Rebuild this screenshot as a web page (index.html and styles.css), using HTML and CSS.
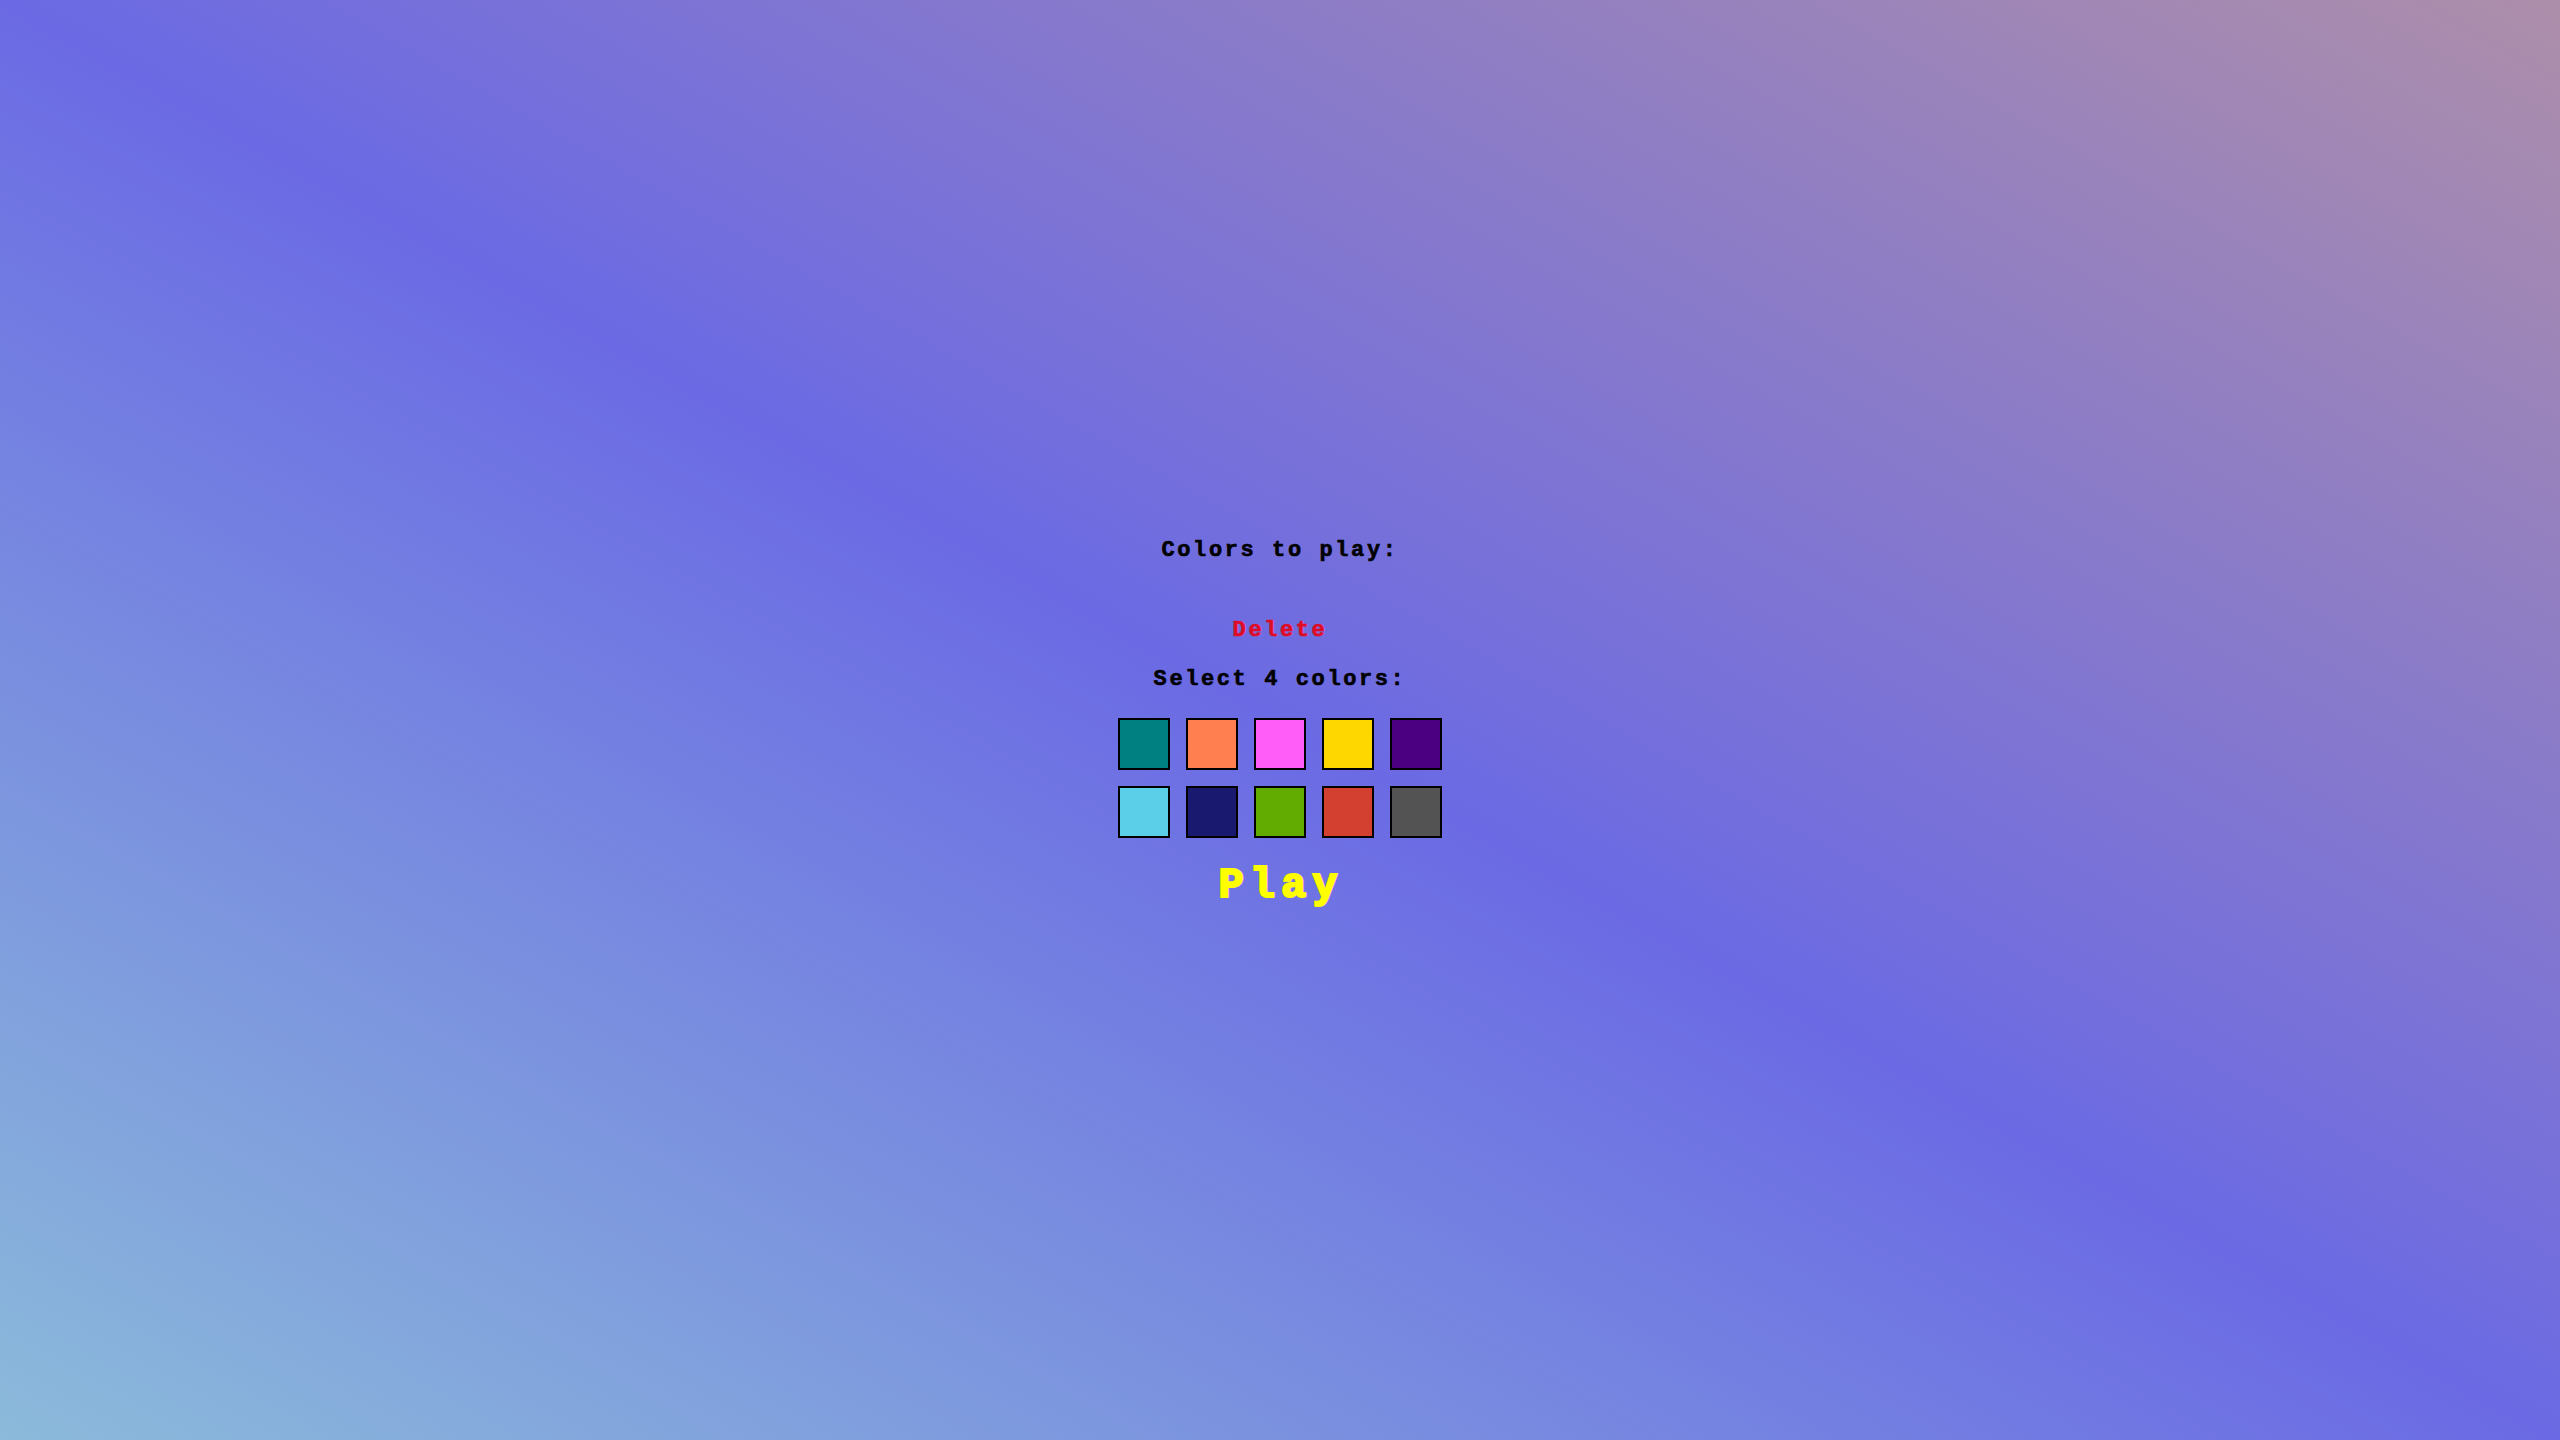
FILE: index.html
```html
<!DOCTYPE html>
<html lang="en">
<head>
<meta charset="utf-8">
<title>Colors</title>
<link rel="stylesheet" href="styles.css">
</head>
<body>
<main class="screen">
  <div class="panel">
    <div class="label">Colors to play:</div>
    <div class="chosen"></div>
    <button class="delete">Delete</button>
    <div class="label select">Select 4 colors:</div>
    <div class="palette">
      <div class="swatch teal"></div>
      <div class="swatch coral"></div>
      <div class="swatch pink"></div>
      <div class="swatch gold"></div>
      <div class="swatch indigo"></div>
      <div class="swatch sky"></div>
      <div class="swatch navy"></div>
      <div class="swatch green"></div>
      <div class="swatch red"></div>
      <div class="swatch grey"></div>
    </div>
    <button class="play">Play</button>
  </div>
</main>
</body>
</html>
```

FILE: styles.css
```css
html, body {
  margin: 0;
  padding: 0;
  height: 100%;
}

body {
  background: linear-gradient(to top right, #8bbada 0%, #6b6ae4 50%, #ad8eaa 100%);
  font-family: "Liberation Mono", "DejaVu Sans Mono", monospace;
  font-weight: bold;
  color: #000;
}

.screen {
  height: 100vh;
  display: flex;
  align-items: center;
  justify-content: center;
}

.panel {
  display: flex;
  flex-direction: column;
  align-items: center;
  padding-top: 6px;
}

.label {
  font-size: 22px;
  line-height: 24px;
  letter-spacing: 2.6px;
  -webkit-text-stroke: 0.6px #000;
}

.chosen {
  height: 24px;
  margin: 16px 0;
}

.delete {
  background: none;
  border: 0;
  padding: 0;
  margin: 0;
  font-family: inherit;
  font-weight: bold;
  font-size: 22px;
  line-height: 24px;
  letter-spacing: 2.6px;
  color: #de0c26;
  -webkit-text-stroke: 0.6px #de0c26;
  text-shadow: 1px 0 rgba(255, 120, 200, 0.45);
  cursor: pointer;
}

.select {
  margin-top: 25px;
}

.palette {
  margin-top: 26px;
  display: grid;
  grid-template-columns: repeat(5, 52px);
  grid-auto-rows: 52px;
  gap: 16px;
}

.swatch {
  box-sizing: border-box;
  border: 2px solid #000;
}

.teal { background: #008080; }
.coral { background: #ff7f50; }
.pink { background: #ff5cf8; }
.gold { background: #ffd700; }
.indigo { background: #4b0082; }
.sky { background: #5ccfe8; }
.navy { background: #191970; }
.green { background: #62ab00; }
.red { background: #d34030; }
.grey { background: #535353; }

.play {
  margin-top: 26px;
  background: none;
  border: 0;
  padding: 0 0 0 2px;
  font-family: inherit;
  font-weight: bold;
  font-size: 42px;
  line-height: 44px;
  letter-spacing: 6px;
  color: #ffff00;
  -webkit-text-stroke: 2px #ffff00;
  text-shadow: 1.5px 0 #f07ad8;
  cursor: pointer;
}
```
